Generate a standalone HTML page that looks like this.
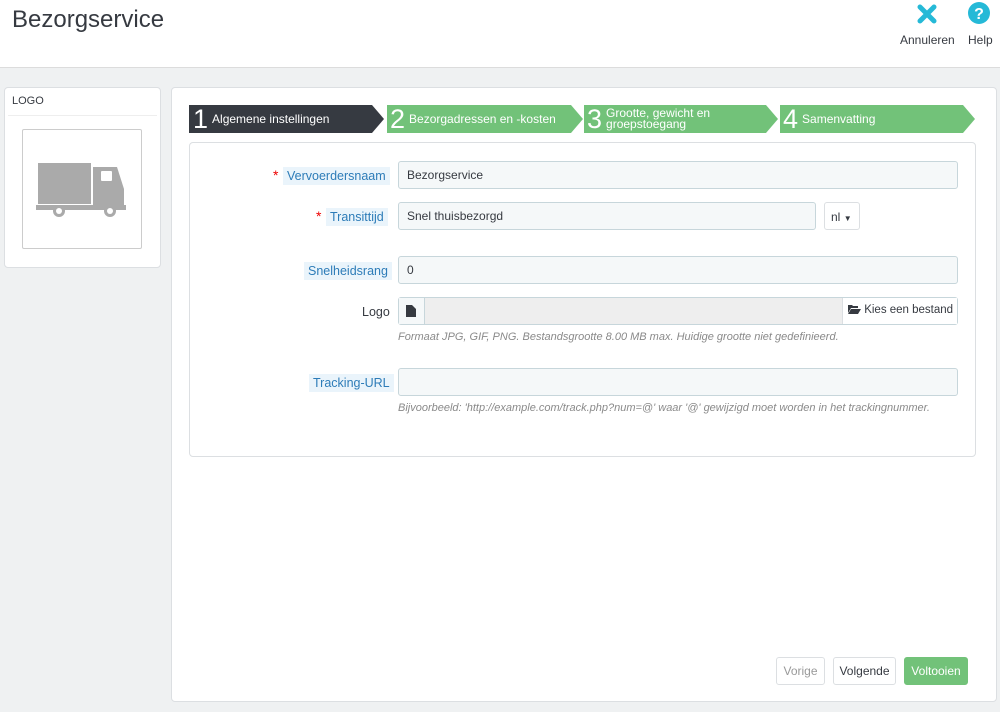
<!DOCTYPE html>
<html><head><meta charset="utf-8"><style>
*{box-sizing:border-box}
body{margin:0;width:1000px;height:712px;background:#eff1f2;font-family:"Liberation Sans",sans-serif;font-size:12px;color:#363a41;position:relative;overflow:hidden}
.a{position:absolute}
.hdr{left:0;top:0;width:1000px;height:68px;background:#fff;border-bottom:1px solid #dcdcdc}
.panel{background:#fff;border:1px solid #dcdfe2;border-radius:4px}
.lbl{background:#eaf4fb;color:#2d7cb8;padding:2px 4px;font-size:12.5px}
.inp{background:#f5f8f9;border:1px solid #c7d6db;border-radius:3px;height:28px;padding:6px 8px;font-size:12px}
.help{font-style:italic;color:#8a8a8a;font-size:11px}
.step{height:28px;top:105px;color:#fff;display:flex;align-items:center;white-space:nowrap}
.step b{font-weight:normal;font-size:27px;margin:0 4px 0 4px;line-height:1}
.step span{font-size:12px;line-height:11px}
.btn{top:657px;height:28px;border:1px solid #dcdfe2;border-radius:3px;background:#fff;font-size:12px;display:flex;align-items:center;justify-content:center}
</style></head><body>
<div class="a hdr"></div>
<div class="a" style="left:12px;top:6px;font-size:24px;color:#363a41">Bezorgservice</div>
<svg class="a" style="left:917px;top:4px" width="20" height="20" viewBox="0 0 20 20"><path d="M3 3L17 17M17 3L3 17" stroke="#25b9d7" stroke-width="5" stroke-linecap="round"/></svg>
<div class="a" style="left:900px;top:33px;font-size:12px">Annuleren</div>
<svg class="a" style="left:968px;top:2px" width="22" height="22" viewBox="0 0 22 22"><circle cx="11" cy="11" r="11" fill="#25b9d7"/><text x="11" y="17" text-anchor="middle" fill="#fff" font-size="16" font-weight="bold" font-family="Liberation Sans">?</text></svg>
<div class="a" style="left:968px;top:33px;font-size:12px">Help</div>

<div class="a panel" style="left:4px;top:87px;width:157px;height:181px"></div>
<div class="a" style="left:12px;top:95px;font-size:11px">LOGO</div>
<div class="a" style="left:8px;top:115px;width:149px;height:1px;background:#eee"></div>
<div class="a" style="left:22px;top:129px;width:120px;height:120px;border:1px solid #ccc;border-radius:2px;background:#fff"></div>
<svg class="a" style="left:35px;top:161px" width="95" height="58" viewBox="0 0 95 58"><rect x="3" y="2" width="53" height="41" fill="#aaa"/><path d="M58 6h24l7 22v17h-31z" fill="#aaa"/><rect x="66" y="10" width="11" height="10" fill="#fff" rx="1"/><rect x="1" y="44" width="90" height="5" fill="#aaa"/><circle cx="24" cy="50" r="6" fill="#aaa"/><circle cx="24" cy="50" r="3" fill="#fff"/><circle cx="75" cy="50" r="6" fill="#aaa"/><circle cx="75" cy="50" r="3" fill="#fff"/></svg>

<div class="a panel" style="left:171px;top:87px;width:826px;height:615px"></div>
<svg class="a" style="left:0;top:105px" width="1000" height="28">
<polygon points="189,0 372,0 384,14 372,28 189,28" fill="#363a41"/>
<polygon points="387,0 571,0 583,14 571,28 387,28" fill="#72c279"/>
<polygon points="584,0 766,0 778,14 766,28 584,28" fill="#72c279"/>
<polygon points="780,0 963,0 975,14 963,28 780,28" fill="#72c279"/>
</svg>
<div class="a step" style="left:189px"><b>1</b><span>Algemene instellingen</span></div>
<div class="a step" style="left:386px"><b>2</b><span>Bezorgadressen en -kosten</span></div>
<div class="a step" style="left:583px"><b>3</b><span>Grootte, gewicht en<br>groepstoegang</span></div>
<div class="a step" style="left:779px"><b>4</b><span>Samenvatting</span></div>

<div class="a panel" style="left:189px;top:142px;width:787px;height:315px"></div>
<div class="a" style="left:273px;top:167px;color:#e00;font-size:14px">*</div>
<div class="a lbl" style="left:283px;top:167px">Vervoerdersnaam</div>
<div class="a inp" style="left:398px;top:161px;width:560px">Bezorgservice</div>
<div class="a" style="left:316px;top:208px;color:#e00;font-size:14px">*</div>
<div class="a lbl" style="left:326px;top:208px">Transittijd</div>
<div class="a inp" style="left:398px;top:202px;width:418px">Snel thuisbezorgd</div>
<div class="a" style="left:824px;top:202px;width:36px;height:28px;border:1px solid #dcdfe2;border-radius:3px;background:#fff;padding:7px 6px;font-size:12px;white-space:nowrap">nl <span style="font-size:8px">▼</span></div>
<div class="a lbl" style="left:304px;top:262px">Snelheidsrang</div>
<div class="a inp" style="left:398px;top:256px;width:560px">0</div>
<div class="a" style="left:362px;top:305px;font-size:12.5px">Logo</div>
<div class="a" style="left:398px;top:297px;width:560px;height:28px;border:1px solid #c7d6db;border-radius:3px;background:#eee"></div>
<div class="a" style="left:399px;top:298px;width:26px;height:26px;background:#f5f8f9;border-right:1px solid #c7d6db"></div>
<svg class="a" style="left:406px;top:305px" width="10" height="12" viewBox="0 0 10 12"><path d="M0 0h6l4 4v8h-10z" fill="#363a41"/></svg>
<div class="a" style="left:842px;top:298px;width:115px;height:26px;background:#fff;border-left:1px solid #dcdfe2;padding:6px 5px;font-size:11.5px;white-space:nowrap"><svg width="13" height="10" viewBox="0 0 13 10" style="vertical-align:-1px"><path d="M0 1h4l1 1h5v2H3L0 9z M3 5h10l-3 5H0z" fill="#363a41"/></svg> Kies een bestand</div>
<div class="a help" style="left:398px;top:331px">Formaat JPG, GIF, PNG. Bestandsgrootte 8.00 MB max. Huidige grootte niet gedefinieerd.</div>
<div class="a lbl" style="left:309px;top:374px">Tracking-URL</div>
<div class="a inp" style="left:398px;top:368px;width:560px"></div>
<div class="a help" style="left:398px;top:402px">Bijvoorbeeld: 'http://example.com/track.php?num=@' waar '@' gewijzigd moet worden in het trackingnummer.</div>

<div class="a btn" style="left:776px;width:49px;color:#999">Vorige</div>
<div class="a btn" style="left:833px;width:63px">Volgende</div>
<div class="a btn" style="left:904px;width:64px;background:#72c279;border-color:#72c279;color:#fff">Voltooien</div>
</body></html>
